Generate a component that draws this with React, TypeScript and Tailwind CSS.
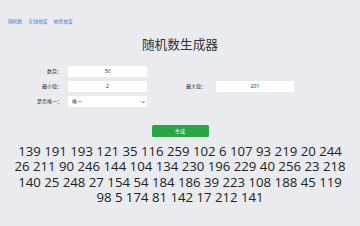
import React from "react";

const cjk = "font-['Noto_Sans','Noto_Sans_CJK_SC',sans-serif]";

export default function App() {
  const nums =
    "139 191 193 121 35 116 259 102 6 107 93 219 20 244 26 211 90 246 144 104 134 230 196 229 40 256 23 218 140 25 248 27 154 54 184 186 39 223 108 188 45 119 98 5 174 81 142 17 212 141";
  return (
    <div className={`w-[360px] min-h-[226px] bg-[#e9ebee] ${cjk} text-[#333]`}>
      <nav className="flex gap-[6px] pl-[8px] pt-[18px] text-[4.8px] leading-[6px] text-[#3d86d8]">
        <a>随机数</a>
        <a>在线抽奖</a>
        <a>抽签抽奖</a>
      </nav>
      <h1 className="mt-[11.5px] text-center text-[12.7px] leading-[16px] text-[#333]">随机数生成器</h1>
      <div className="mt-[14.5px] grid grid-cols-[68px_79px_69px_78px] gap-y-[4px] text-[5px] leading-[11px]">
        <label className="pr-[6px] text-right">数目：</label>
        <div className="h-[11px] rounded-[1px] bg-white text-center">50</div>
        <div />
        <div />
        <label className="pr-[6px] text-right">最小值：</label>
        <div className="h-[11px] rounded-[1px] bg-white text-center">2</div>
        <label className="pr-[10px] text-right">最大值：</label>
        <div className="h-[11px] rounded-[1px] bg-white text-center">201</div>
        <label className="pr-[6px] text-right">是否唯一：</label>
        <div className="flex h-[11px] items-center justify-between rounded-[1px] bg-white pl-[4px] pr-[2px]">
          <span>唯一</span>
          <svg width="4" height="4" viewBox="0 0 4 4">
            <path d="M0.5 1.2 L2 2.8 L3.5 1.2" fill="none" stroke="#444" strokeWidth="0.8" />
          </svg>
        </div>
        <div />
        <div />
      </div>
      <div className="mt-[18px] flex justify-center">
        <button className="h-[12px] w-[57px] rounded-[1.5px] bg-[#28a745] text-[5px] leading-[12px] text-white">生成</button>
      </div>
      <div className="mt-[6.5px] px-[12px] text-center font-['Open_Sans',sans-serif] text-[13.2px] leading-[15.5px] text-[#222]">
        {nums}
      </div>
    </div>
  );
}
